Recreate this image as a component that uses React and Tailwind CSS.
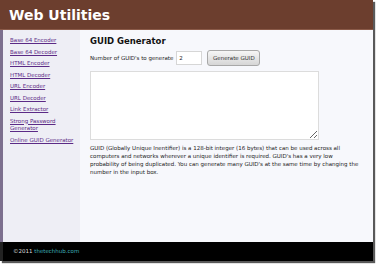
import React, { useState } from "react";

const links = [
  "Base 64 Encoder",
  "Base 64 Decoder",
  "HTML Encoder",
  "HTML Decoder",
  "URL Encoder",
  "URL Decoder",
  "Link Extractor",
  "Strong Password Generator",
  "Online GUID Generator",
];

export default function App() {
  const [count, setCount] = useState("2");

  return (
    <div className="w-[378px] h-[264px] bg-white overflow-hidden" style={{ fontFamily: '"DejaVu Sans", Verdana, sans-serif' }}>
      <div className="w-[373px] h-[261px] flex flex-col shadow-[2px_2px_1px_rgba(0,0,0,0.65)]">
        {/* Header */}
        <div className="h-[30px] bg-[#6c3e2e] px-[9px] flex items-center border-b border-[#8a5a48]">
          <h1 className="text-[14px] font-bold text-white leading-none">Web Utilities</h1>
        </div>

        <div className="flex flex-1">
          {/* Sidebar */}
          <div className="w-[80px] bg-[#eeeef5] border-l-[3px] border-[#7c6f8e] pl-[7px] pr-[4px] pt-[7px]">
            <ul className="flex flex-col gap-[4px]">
              {links.map((l) => (
                <li key={l}>
                  <a href="#" className="text-[5.5px] leading-[7.5px] text-[#5b2a86] underline block">
                    {l}
                  </a>
                </li>
              ))}
            </ul>
          </div>

          {/* Main */}
          <div className="flex-1 bg-[#f7f8fc] pl-[10px] pt-[6px]">
            <h2 className="text-[8.5px] font-bold text-[#111] leading-[10px]">GUID Generator</h2>
            <div className="flex items-center mt-[4px] h-[16px]">
              <span className="text-[5.5px] text-[#222] mr-[3px]">Number of GUID's to generate</span>
              <input
                value={count}
                onChange={(e) => setCount(e.target.value)}
                className="w-[26px] h-[14px] bg-white border border-[#d6d6d6] text-[5.5px] px-[2px] text-[#222] outline-none"
              />
              <button className="ml-[5px] w-[53px] h-[16px] rounded-[3px] border border-[#a8a8a8] bg-gradient-to-b from-[#f6f6f6] to-[#d6d6d6] text-[5.5px] text-[#333]">
                Generate GUID
              </button>
            </div>
            <textarea className="block mt-[5px] w-[229px] h-[69px] bg-white border border-[#dcdcdc] resize outline-none"></textarea>
            <p className="mt-[4px] w-[272px] text-[5.5px] leading-[8px] text-[#222]">
              GUID (Globally Unique Inentifier) is a 128-bit integer (16 bytes) that can be used across all
              computers and networks wherever a unique identifier is required. GUID's has a very low
              probability of being duplicated. You can generate many GUID's at the same time by changing the
              number in the input box.
            </p>
          </div>
        </div>

        {/* Footer */}
        <div className="h-[19px] bg-black flex items-center pl-[10px] border-l-[3px] border-[#222]">
          <span className="text-[5.5px] text-[#ddd]">
            ©2011 <a href="#" className="text-[#3fb0b8]">thetechhub.com</a>
          </span>
        </div>
      </div>
    </div>
  );
}
